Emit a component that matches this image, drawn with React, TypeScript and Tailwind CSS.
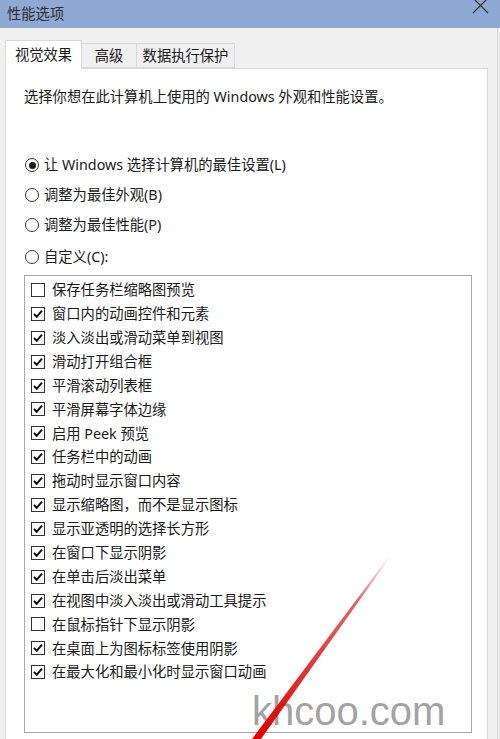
import React from "react";

const OPTIONS: { label: string; checked: boolean }[] = [
  { label: "保存任务栏缩略图预览", checked: false },
  { label: "窗口内的动画控件和元素", checked: true },
  { label: "淡入淡出或滑动菜单到视图", checked: true },
  { label: "滑动打开组合框", checked: true },
  { label: "平滑滚动列表框", checked: true },
  { label: "平滑屏幕字体边缘", checked: true },
  { label: "启用 Peek 预览", checked: true },
  { label: "任务栏中的动画", checked: true },
  { label: "拖动时显示窗口内容", checked: true },
  { label: "显示缩略图，而不是显示图标", checked: true },
  { label: "显示亚透明的选择长方形", checked: true },
  { label: "在窗口下显示阴影", checked: true },
  { label: "在单击后淡出菜单", checked: true },
  { label: "在视图中淡入淡出或滑动工具提示", checked: true },
  { label: "在鼠标指针下显示阴影", checked: false },
  { label: "在桌面上为图标标签使用阴影", checked: true },
  { label: "在最大化和最小化时显示窗口动画", checked: true },
];

const RADIOS = [
  { label: "让 Windows 选择计算机的最佳设置(L)", selected: true },
  { label: "调整为最佳外观(B)", selected: false },
  { label: "调整为最佳性能(P)", selected: false },
  { label: "自定义(C):", selected: false },
];

const font = "font-['Noto_Sans','Noto_Sans_CJK_SC',sans-serif]";

function Radio({ selected }: { selected: boolean }) {
  return (
    <span className="w-[14px] h-[14px] rounded-full border border-[#333] bg-white flex items-center justify-center shrink-0">
      {selected && <span className="w-[7px] h-[7px] rounded-full bg-[#1a1a1a]" />}
    </span>
  );
}

function Checkbox({ checked }: { checked: boolean }) {
  return (
    <span className="w-[14px] h-[14px] border border-[#333] bg-white flex items-center justify-center shrink-0">
      {checked && (
        <svg width="12" height="12" viewBox="0 0 12 12">
          <path d="M2 6 L4.7 8.8 L10 2.6" fill="none" stroke="#111" strokeWidth="2" />
        </svg>
      )}
    </span>
  );
}

export default function App() {
  return (
    <div className={`relative w-[500px] h-[739px] overflow-hidden bg-[#f0f0f0] text-[#1a1a1a] ${font}`}>
      {/* title bar */}
      <div className="h-[28px] bg-[#8fa9d4] flex items-center pl-[7px] relative">
        <span className="text-[14.3px] text-[#2e2e2e] leading-none">性能选项</span>
        <svg className="absolute left-[472px] top-[-3px]" width="18" height="17" viewBox="0 0 18 17">
          <path d="M1 1 L16 16 M16 1 L1 16" stroke="#333" strokeWidth="1.2" />
        </svg>
      </div>

      <div className="w-[498px] h-[711px] border-r border-[#d4d4d4] pl-[5px] pt-[12px]">
        {/* tabs */}
        <div className="flex items-end h-[28px] text-[14.3px]">
          <div className="relative z-10 -mb-px w-[77px] h-[29px] bg-white border border-b-0 border-[#d9d9d9] flex items-center justify-center">
            视觉效果
          </div>
          <div className="w-[55px] h-[25px] bg-[#f0f0f0] border border-l-0 border-[#d9d9d9] flex items-center justify-center">
            高级
          </div>
          <div className="w-[98px] h-[25px] bg-[#f0f0f0] border border-l-0 border-[#d9d9d9] flex items-center justify-center">
            数据执行保护
          </div>
        </div>

        {/* tab page */}
        <div className="w-[483px] h-[700px] bg-white border border-[#d9d9d9] pl-[18px] pt-[18px]">
          <p className="text-[14.3px] leading-[20px]">选择你想在此计算机上使用的 Windows 外观和性能设置。</p>

          <div className="mt-[43px] flex flex-col">
            {RADIOS.map((r, i) => (
              <div key={r.label} className={`h-[30px] flex items-center gap-[5px] pl-[1px] text-[14.3px] ${i === 3 ? "mt-[2px]" : ""}`}>
                <Radio selected={r.selected} />
                <span>{r.label}</span>
              </div>
            ))}
          </div>

          <div className="mt-[3px] w-[448px] h-[458px] border border-[#a8a8a8] pt-[2px] pl-[6px]">
            {OPTIONS.map((o) => (
              <div key={o.label} className="h-[23.9px] flex items-center gap-[7px] text-[14.3px]">
                <Checkbox checked={o.checked} />
                <span>{o.label}</span>
              </div>
            ))}
          </div>
        </div>
      </div>

      {/* watermark */}
      <div className="absolute left-[252px] top-[691px] text-[40px] leading-[40px] text-[#a3a3a3] font-['Liberation_Sans',Arial,sans-serif]">
        khcoo.com
      </div>

      {/* red annotation stroke */}
      <svg className="absolute left-0 top-0 pointer-events-none" width="500" height="739" viewBox="0 0 500 739">
        <defs>
          <linearGradient id="redfade" x1="390" y1="555" x2="255" y2="739" gradientUnits="userSpaceOnUse">
            <stop offset="0" stopColor="#e02020" stopOpacity="0" />
            <stop offset="0.25" stopColor="#d42020" stopOpacity="0.7" />
            <stop offset="1" stopColor="#e00000" stopOpacity="1" />
          </linearGradient>
        </defs>
        <polygon points="390,555 391,556 261,739 252,739" fill="url(#redfade)" />
      </svg>
    </div>
  );
}
